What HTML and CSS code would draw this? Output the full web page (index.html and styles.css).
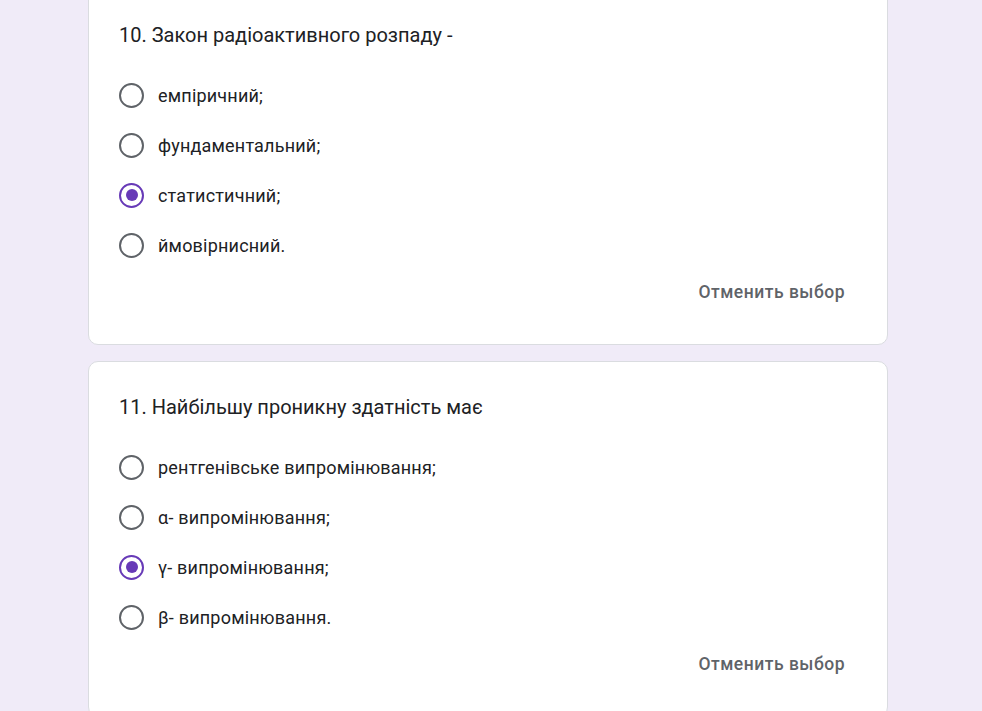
FILE: index.html
```html
<!DOCTYPE html>
<html lang="uk">
<head>
<meta charset="utf-8">
<title>Форма</title>
<link rel="stylesheet" href="styles.css">
</head>
<body>
<div class="page">
  <div class="card first">
    <div class="question">10. Закон радіоактивного розпаду -</div>
    <div class="options">
      <label class="option"><span class="radio"></span><span class="label">емпіричний;</span></label>
      <label class="option"><span class="radio"></span><span class="label">фундаментальний;</span></label>
      <label class="option"><span class="radio checked"></span><span class="label">статистичний;</span></label>
      <label class="option"><span class="radio"></span><span class="label">ймовірнисний.</span></label>
    </div>
    <div class="actions"><span class="clear">Отменить выбор</span></div>
  </div>
  <div class="card">
    <div class="question">11. Найбільшу проникну здатність має</div>
    <div class="options">
      <label class="option"><span class="radio"></span><span class="label">рентгенівське випромінювання;</span></label>
      <label class="option"><span class="radio"></span><span class="label">α- випромінювання;</span></label>
      <label class="option"><span class="radio checked"></span><span class="label">γ- випромінювання;</span></label>
      <label class="option"><span class="radio"></span><span class="label">β- випромінювання.</span></label>
    </div>
    <div class="actions"><span class="clear">Отменить выбор</span></div>
  </div>
</div>
</body>
</html>
```
FILE: styles.css
```css
html, body {
  margin: 0;
  padding: 0;
  background: #f0ebf8;
  overflow: hidden;
  height: 711px;
}
.page {
  margin-left: 88px;
  width: 800px;
  display: flex;
  flex-direction: column;
  gap: 16px;
  font-family: Roboto, "Liberation Sans", sans-serif;
  color: #202124;
}
.card {
  background: #fff;
  border: 1px solid #dadce0;
  border-radius: 10px;
  padding: 30px;
}
.card.first {
  margin-top: -11px;
}
.question {
  font-size: 20px;
  line-height: 30px;
  letter-spacing: 0;
}
.options {
  margin-top: 20px;
  display: flex;
  flex-direction: column;
}
.option {
  height: 50px;
  display: flex;
  align-items: center;
}
.radio {
  box-sizing: border-box;
  width: 25px;
  height: 25px;
  border: 2.5px solid #5f6368;
  border-radius: 50%;
  display: flex;
  align-items: center;
  justify-content: center;
  flex: none;
}
.radio.checked {
  border-color: #673ab7;
}
.radio.checked::after {
  content: "";
  width: 12px;
  height: 12px;
  border-radius: 50%;
  background: #673ab7;
}
.label {
  padding-left: 14px;
  font-size: 18px;
  letter-spacing: 0.2px;
  line-height: 25px;
}
.actions {
  display: flex;
  justify-content: flex-end;
  height: 44px;
  align-items: center;
}
.clear {
  padding: 0 12px;
  font-size: 17.5px;
  font-weight: 500;
  color: #5f6368;
  letter-spacing: 0.5px;
}
```
